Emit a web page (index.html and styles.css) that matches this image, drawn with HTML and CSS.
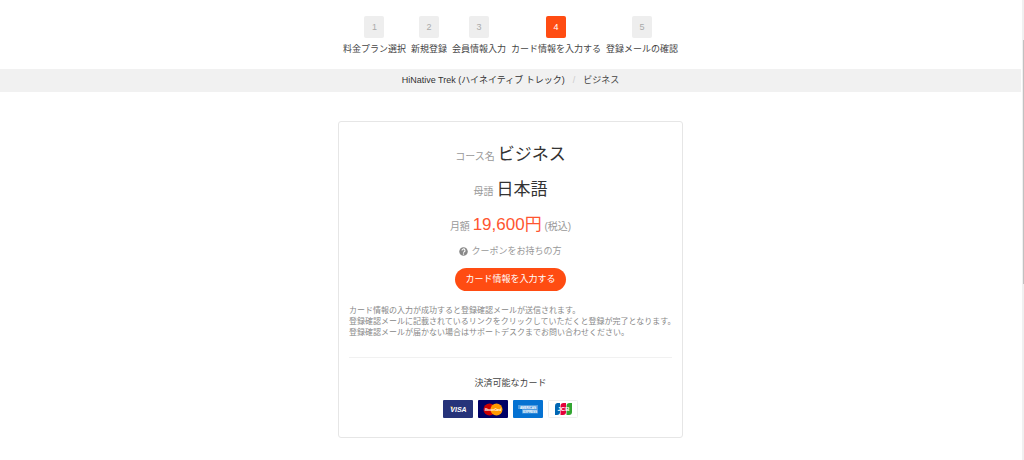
FILE: index.html
```
<!DOCTYPE html>
<html lang="ja">
<head>
  <meta charset="UTF-8" />
  <meta name="viewport" content="width=device-width, initial-scale=1.0"/>
  <title>HiNative Trek</title>
  <link rel="stylesheet" href="styles.css">
</head>
<body>
  <ol class="steps">
    <li><span class="num">1</span>料金プラン選択</li>
    <li><span class="num">2</span>新規登録</li>
    <li><span class="num">3</span>会員情報入力</li>
    <li class="active"><span class="num">4</span>カード情報を入力する</li>
    <li><span class="num">5</span>登録メールの確認</li>
  </ol>

  <nav class="breadcrumb">
    <a class="course-link" href="#">HiNative Trek (ハイネイティブ トレック)</a>
    <span class="slash">/</span>
    <span>ビジネス</span>
  </nav>

  <main class="card">
    <p class="row">コース名 <strong>ビジネス</strong></p>
    <p class="row">母語 <strong>日本語</strong></p>
    <p class="row">月額 <strong class="price">19,600円</strong> (税込)</p>

    <a class="coupon" href="#">
      <svg width="9" height="9" viewBox="0 0 18 18">
        <circle cx="9" cy="9" r="8.5" fill="#888"/>
        <path d="M6 7a3 3 0 1 1 4.600 2.400Q9 10.300 9 11.500" fill="none" stroke="#fff" stroke-width="2.200"/>
        <circle cx="9" cy="14" r="1.400" fill="#fff"/>
      </svg>
      クーポンをお持ちの方
    </a>
    <button class="submit" type="button">カード情報を入力する</button>

    <p class="note">
      カード情報の入力が成功すると登録確認メールが送信されます。<br>
      登録確認メールに記載されているリンクをクリックしていただくと登録が完了となります。<br>
      登録確認メールが届かない場合はサポートデスクまでお問い合わせください。
    </p>

    <section class="payment">
      <h2>決済可能なカード</h2>
      <div class="brands">
        <svg viewBox="0 0 30 18" role="img" aria-label="VISA">
          <rect width="30" height="18" rx="1" fill="#26337a"/>
          <path d="M7 6.500h2.500l1 3z" fill="#e8a33d"/>
          <text x="15.500" y="12" class="visa">VISA</text>
        </svg>
        <svg viewBox="0 0 30 18" role="img" aria-label="MasterCard">
          <rect width="30" height="18" rx="1" fill="#000066"/>
          <circle cx="11.500" cy="9.500" r="6" fill="#cc0000"/>
          <circle cx="18.500" cy="9.500" r="6" fill="#ff9900"/>
          <text x="15" y="11" class="master">MasterCard</text>
        </svg>
        <svg viewBox="0 0 30 18" role="img" aria-label="American Express">
          <rect width="30" height="18" rx="1" fill="#0572d2"/>
          <path d="M5 5h20v4H5zM9 9h16v4.500H9z" fill="#fff" opacity=".3"/>
          <text x="15" y="8.500" class="amex">AMERICAN</text>
          <text x="17" y="12.800" class="amex">EXPRESS</text>
        </svg>
        <svg viewBox="0 0 30 18" role="img" aria-label="JCB">
          <rect x=".5" y=".5" width="29" height="17" rx="1" fill="#fff" stroke="#eee"/>
          <path d="M9 3h3v9a3 3 0 0 1-3 3H7V6a3 3 0 0 1 2-3z" fill="#0066b3"/>
          <path d="M15.500 3h2.500v9a3 3 0 0 1-3 3h-2.500V6a3 3 0 0 1 3-3z" fill="#e4003a"/>
          <path d="M21.500 3h2.500v9a3 3 0 0 1-3 3h-2.500V6a3 3 0 0 1 3-3z" fill="#33a532"/>
          <text x="15.500" y="11.300" class="jcb">JCB</text>
        </svg>
      </div>
    </section>
  </main>

  <div class="scrollbar"><div class="thumb"></div></div>
</body>
</html>
```

FILE: styles.css
```
* {
  box-sizing: border-box;
}

body {
  font-family: "Liberation Sans", "Noto Sans CJK JP", sans-serif;
  font-size: 9px;
  line-height: 12px;
  margin: 0;
  padding-right: 3px;
  background: #fff;
  color: #444;
}

a {
  color: inherit;
  text-decoration: none;
}

.steps {
  display: flex;
  justify-content: center;
  gap: 5px;
  list-style: none;
  margin: 0;
  padding: 16px 0 14px;
}

.steps li {
  display: flex;
  flex-direction: column;
  align-items: center;
  gap: 5px;
}

.num {
  width: 20px;
  line-height: 22px;
  border-radius: 2px;
  background: #eee;
  color: #aaa;
  text-align: center;
}

.active .num {
  background: #ff4c12;
  color: #fff;
}

.breadcrumb {
  display: flex;
  justify-content: center;
  gap: 8px;
  padding: 5px 0 6px;
  background: #f1f1f1;
}

.course-link {
  color: #333;
}

.slash {
  color: #ccc;
}

.card {
  display: flex;
  flex-direction: column;
  align-items: center;
  max-width: 345px;
  margin: 29px auto 22px;
  padding: 16px 10px 19px;
  border: 1px solid #e6e6e6;
  border-radius: 3px;
}

.row {
  margin: 0;
  font-size: 10px;
  line-height: 33px;
  color: #999;
}

.row strong {
  font-size: 17px;
  font-weight: normal;
  color: #333;
}

.row .price {
  color: #ff5530;
}

.coupon {
  display: flex;
  align-items: center;
  gap: 3px;
  margin: 2px 0 11px;
  color: #999;
}

.submit {
  padding: 0 10px;
  border: none;
  border-radius: 12px;
  background: #ff4c12;
  color: #fff;
  font-family: inherit;
  font-size: 9px;
  line-height: 23px;
  cursor: pointer;
}

.note {
  align-self: stretch;
  margin: 14px 0 19px;
  font-size: 8px;
  line-height: 11px;
  white-space: nowrap;
  color: #888;
}

.payment {
  align-self: stretch;
  padding-top: 19px;
  border-top: 1px solid #f1f1f1;
}

.payment h2 {
  margin: 0 0 11px;
  font-size: 9px;
  font-weight: normal;
  text-align: center;
}

.brands {
  display: flex;
  justify-content: center;
  gap: 5px;
}

.brands svg {
  width: 30px;
  height: 18px;
}

.brands text {
  fill: #fff;
  text-anchor: middle;
  font-weight: bold;
}

.visa {
  font-size: 7px;
  font-style: italic;
}

.master {
  font-size: 3px;
  font-style: italic;
}

.amex {
  font-size: 3px;
}

.jcb {
  font-size: 6px;
}

.scrollbar {
  position: fixed;
  top: 0;
  right: 0;
  bottom: 0;
  width: 2px;
  padding: 40px 0 0 1px;
  background: #f0f0f0;
}

.thumb {
  height: 58%;
  background: #c1c1c1;
}
```
